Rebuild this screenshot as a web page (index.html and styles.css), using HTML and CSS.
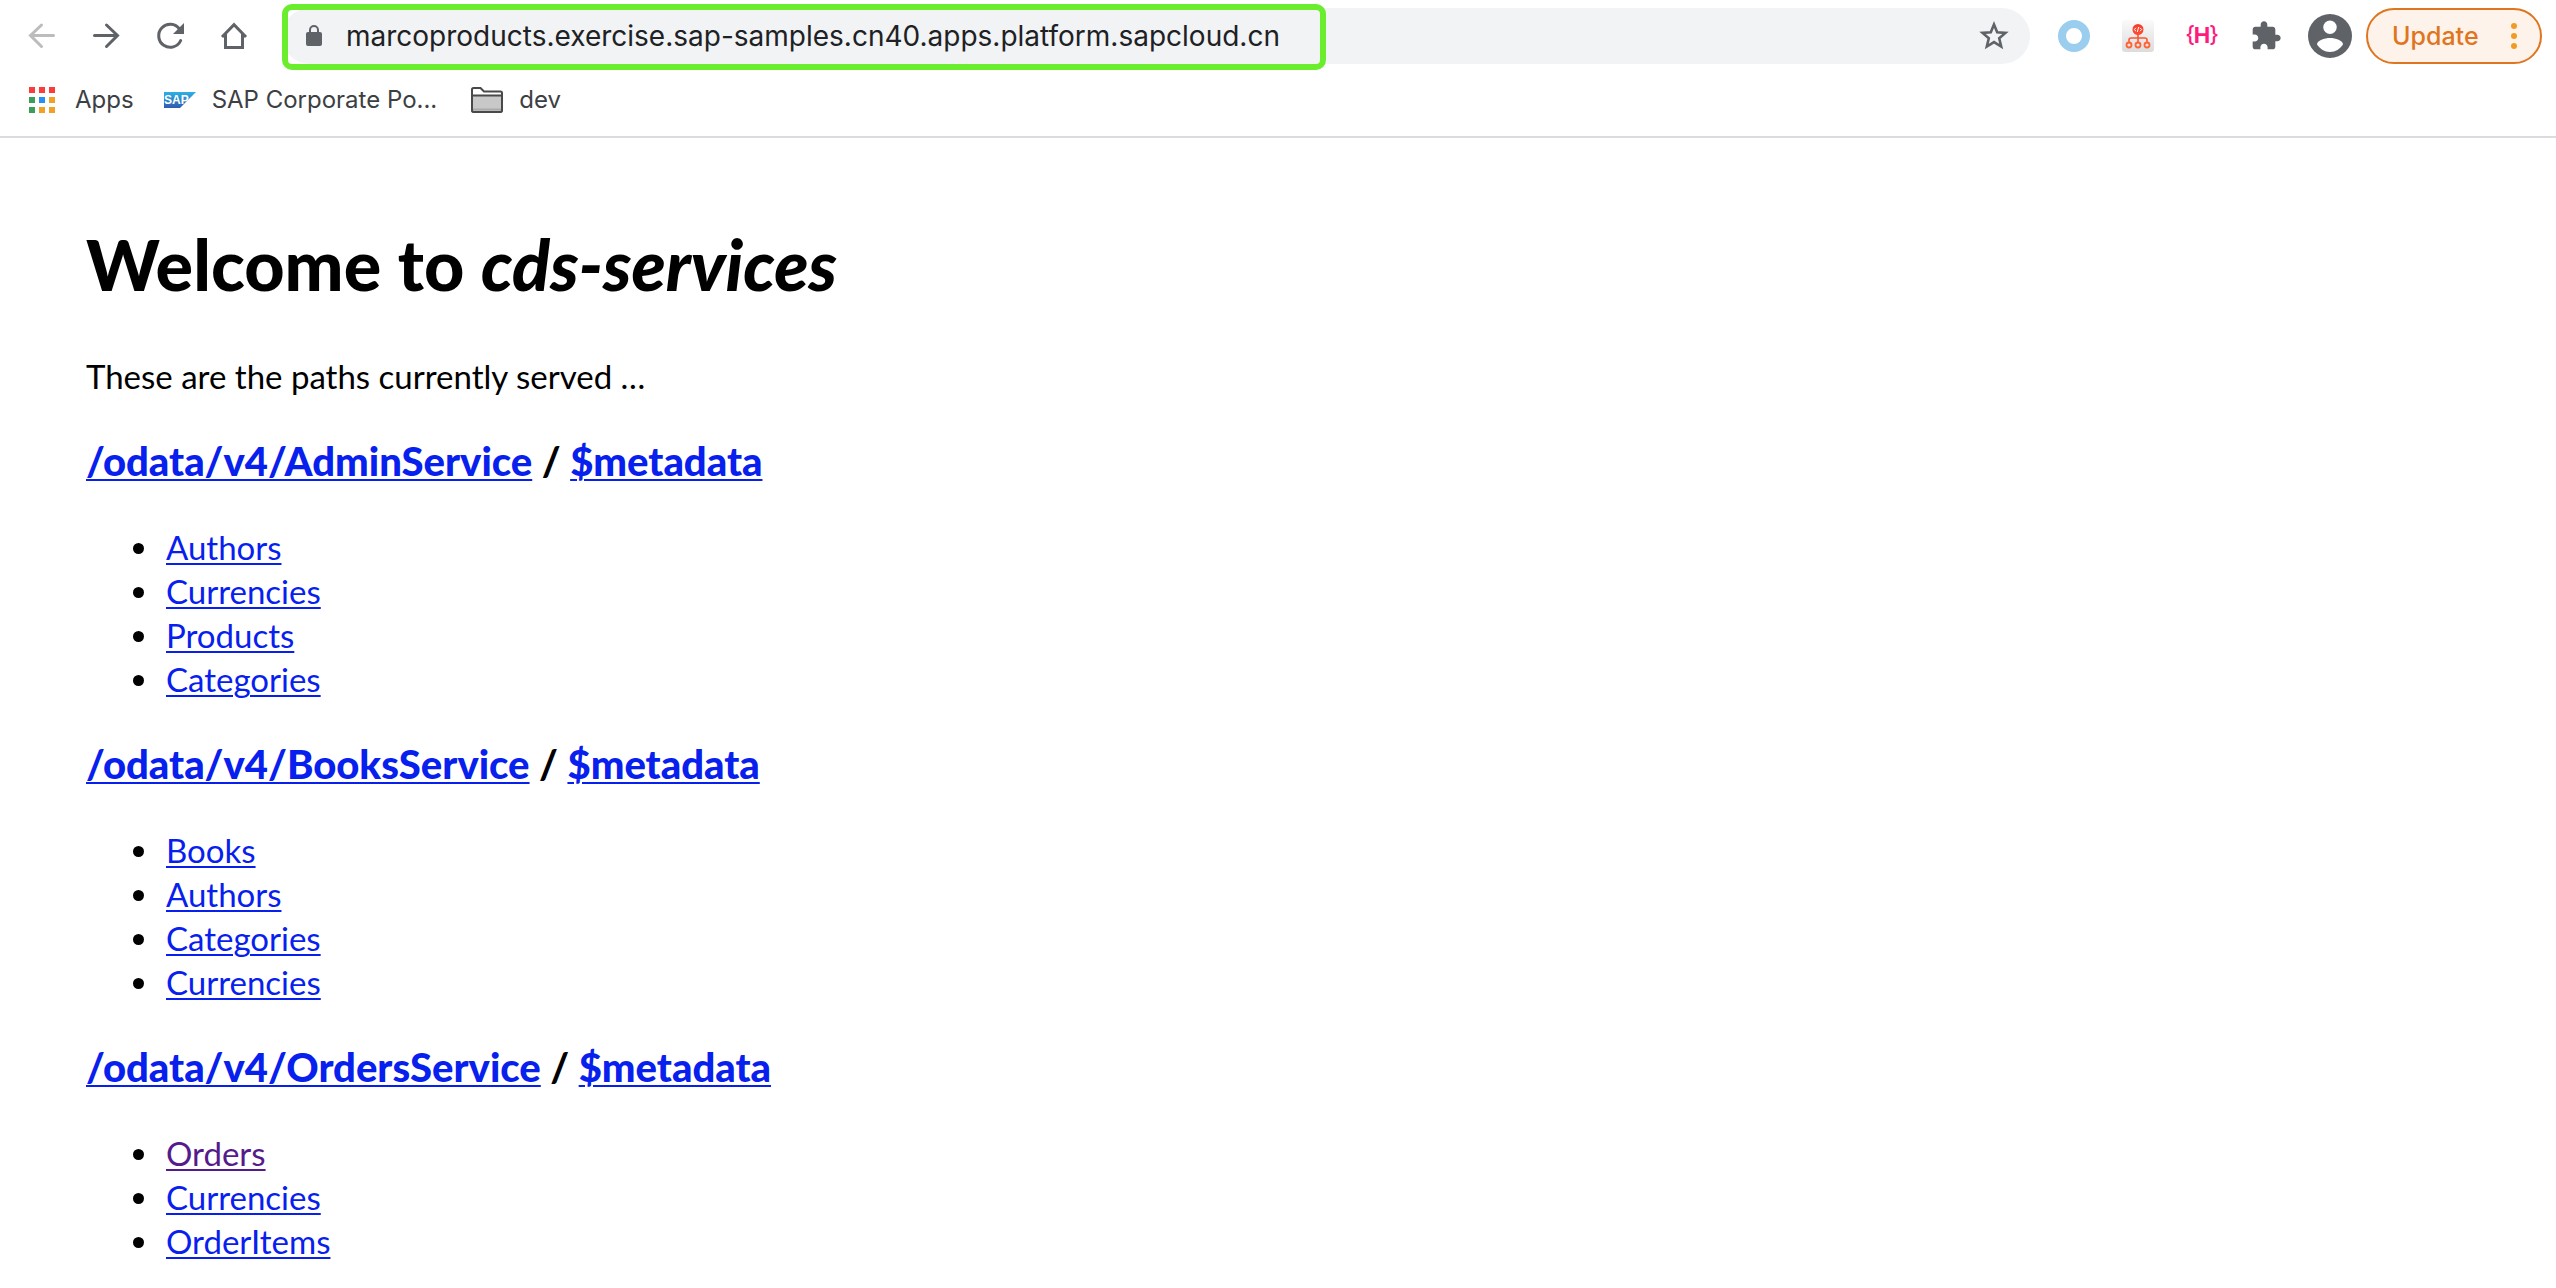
FILE: index.html
```html
<!DOCTYPE html>
<html lang="en">
<head>
<meta charset="utf-8">
<title>cds-services</title>
<link rel="stylesheet" href="styles.css">
</head>
<body>
<header class="browser">
  <div class="toolbar">
    <nav class="button-row" aria-label="Navigation">
      <button class="icon-button" aria-label="Back" disabled>
        <svg viewBox="0 0 32 32" width="32" height="32" fill="none" stroke="#babcbe" stroke-width="3" stroke-linecap="round"><path d="M27.500 15.500H5M15.500 5L4.500 15.500L15.500 26.500"/></svg>
      </button>
      <button class="icon-button" aria-label="Forward">
        <svg viewBox="0 0 32 32" width="32" height="32" fill="none" stroke="#5f6368" stroke-width="3" stroke-linecap="round"><path d="M4.500 15.500H27M16.500 5L27.500 15.500L16.500 26.500"/></svg>
      </button>
      <button class="icon-button" aria-label="Reload">
        <svg viewBox="0 0 32 32" width="32" height="32"><path d="M26.700 20.500A11.500 11.500 0 1 1 25.500 9" fill="none" stroke="#5f6368" stroke-width="3" stroke-linecap="round"/><path d="M30 3V14H19Z" fill="#5f6368"/></svg>
      </button>
      <button class="icon-button" aria-label="Home">
        <svg viewBox="0 0 32 32" width="32" height="32" fill="none" stroke="#5f6368" stroke-width="3"><path d="M4 17L16 4.700L28 17M7.500 14V27.500H24.500V14"/></svg>
      </button>
    </nav>
    <div class="omnibox">
      <label class="address">
        <svg viewBox="0 0 16 22" width="16" height="22"><rect y="7" width="16" height="14" rx="2" fill="#5f6368"/><path d="M4 8V5a4 4 0 0 1 8 0V8" fill="none" stroke="#5f6368" stroke-width="2"/></svg>
        <input class="url" type="text" aria-label="Address" value="marcoproducts.exercise.sap-samples.cn40.apps.platform.sapcloud.cn">
      </label>
      <button class="icon-button" aria-label="Bookmark this page">
        <svg viewBox="0 0 32 32" width="32" height="32"><path d="M16 4.500L19.200 12.200L27.500 12.900L21.200 18.300L23.200 26.500L16 22.100L8.800 26.500L10.800 18.300L4.500 12.900L12.800 12.200Z" fill="none" stroke="#5f6368" stroke-width="2.600"/></svg>
      </button>
    </div>
    <div class="button-row">
      <button class="icon-button" aria-label="Circle extension">
        <svg viewBox="0 0 32 32" width="32" height="32"><circle cx="16" cy="16" r="12" fill="#fff" stroke="#9bcdee" stroke-width="8"/></svg>
      </button>
      <button class="icon-button" aria-label="Code tree extension">
        <svg viewBox="0 0 32 32" width="32" height="32">
          <defs>
            <linearGradient id="tile" x1="0" y1="0" x2="0" y2="1"><stop offset="0" stop-color="#fafafa"/><stop offset="1" stop-color="#dcdcdc"/></linearGradient>
            <linearGradient id="tree" gradientUnits="userSpaceOnUse" x1="0" y1="4" x2="0" y2="28"><stop offset="0" stop-color="#f9382f"/><stop offset="1" stop-color="#ff6a35"/></linearGradient>
          </defs>
          <rect width="32" height="32" rx="3" fill="url(#tile)"/>
          <circle cx="16" cy="9.500" r="5.500" fill="url(#tree)"/>
          <path d="M14 7.800L12.300 9.500L14 11.200M18 7.800L19.700 9.500L18 11.200M16.700 7L15.300 12" fill="none" stroke="#fff" stroke-width="1"/>
          <path d="M16 14V22M7 22V20Q7 18 9 18H23Q25 18 25 20V22" fill="none" stroke="url(#tree)" stroke-width="1.600"/>
          <g fill="none" stroke="#ff6233" stroke-width="1.800"><circle cx="7" cy="25" r="2.500"/><circle cx="16" cy="25" r="2.500"/><circle cx="25" cy="25" r="2.500"/></g>
        </svg>
      </button>
      <button class="icon-button" aria-label="H extension">
        <svg class="h-mark" viewBox="0 0 32 32" width="32" height="32"><text class="h-brace" x="4" y="22">{</text><text class="h-letter" x="16" y="23">H</text><text class="h-brace" x="28" y="22">}</text></svg>
      </button>
      <button class="icon-button" aria-label="Extensions">
        <svg viewBox="0 0 24 24" width="32" height="32"><path d="M20.500 11H19V7c0-1.100-.9-2-2-2h-4V3.500C13 2.120 11.880 1 10.500 1S8 2.120 8 3.500V5H4c-1.100 0-1.990.9-1.990 2v3.800H3.500c1.490 0 2.700 1.210 2.700 2.700s-1.210 2.700-2.700 2.700H2V20c0 1.100.9 2 2 2h3.800v-1.500c0-1.490 1.210-2.700 2.700-2.700 1.490 0 2.700 1.210 2.700 2.700V22H17c1.100 0 2-.9 2-2v-4h1.500c1.380 0 2.500-1.120 2.500-2.500S21.880 11 20.500 11z" fill="#5f6368"/></svg>
      </button>
      <button class="icon-button" aria-label="Profile">
        <svg viewBox="0 0 44 44" width="44" height="44"><circle cx="22" cy="22" r="22" fill="#5f6368"/><circle cx="22" cy="13.300" r="6.700" fill="#fff"/><path d="M9 30.500C9 26.500 16.500 24 22 24S35 26.500 35 30.500C32 35 27.500 38 22 38S12 35 9 30.500Z" fill="#fff"/></svg>
      </button>
      <button class="update">Update
        <svg viewBox="0 0 8 28" width="8" height="28" fill="#f29a26"><circle cx="4" cy="4" r="3"/><circle cx="4" cy="14" r="3"/><circle cx="4" cy="24" r="3"/></svg>
      </button>
    </div>
  </div>
  <nav class="bookmarks" aria-label="Bookmarks">
    <a class="bookmark apps" href="#">
      <svg viewBox="0 0 26 26" width="26" height="26"><path d="M0 0h6v6H0zM10 0h6v6h-6zM20 0h6v6h-6z" fill="#fa3c3a"/><path d="M0 10h6v6H0zM0 20h6v6H0z" fill="#399e5a"/><path d="M10 10h6v6h-6z" fill="#2490f5"/><path d="M20 10h6v6h-6zM10 20h6v6h-6zM20 20h6v6h-6z" fill="#f2a126"/></svg>
      Apps
    </a>
    <a class="bookmark" href="#">
      <svg viewBox="0 0 32 16" width="32" height="16"><defs><linearGradient id="sap" x1="0" y1="0" x2="0" y2="1"><stop offset="0" stop-color="#2cb1e6"/><stop offset="1" stop-color="#2f5bae"/></linearGradient></defs><path d="M0 0H32L16 16H0Z" fill="url(#sap)"/><text class="sap-mark" x="0" y="12">SAP</text></svg>
      SAP Corporate Po...
    </a>
    <a class="bookmark" href="#">
      <svg viewBox="0 0 32 26" width="32" height="26" stroke="#48494b" stroke-width="2"><path d="M1 23V2.500Q1 1 2.500 1H9.500L13 4.500H29.500Q31 4.500 31 6V23Q31 25 29 25H3Q1 25 1 23Z" fill="#fff"/><path d="M1 8.500H31V23Q31 25 29 25H3Q1 25 1 23Z" fill="#c8c8c8"/><path d="M2 22.500H30" stroke="#aaa"/></svg>
      dev
    </a>
  </nav>
</header>
<main class="page">
  <h1>Welcome to <em>cds-services</em></h1>
  <p>These are the paths currently served …</p>
  <h3><a href="#">/odata/v4/AdminService</a> / <a href="#">$metadata</a></h3>
  <ul>
    <li><a href="#">Authors</a></li>
    <li><a href="#">Currencies</a></li>
    <li><a href="#">Products</a></li>
    <li><a href="#">Categories</a></li>
  </ul>
  <h3><a href="#">/odata/v4/BooksService</a> / <a href="#">$metadata</a></h3>
  <ul>
    <li><a href="#">Books</a></li>
    <li><a href="#">Authors</a></li>
    <li><a href="#">Categories</a></li>
    <li><a href="#">Currencies</a></li>
  </ul>
  <h3><a href="#">/odata/v4/OrdersService</a> / <a href="#">$metadata</a></h3>
  <ul>
    <li><a class="visited" href="#">Orders</a></li>
    <li><a href="#">Currencies</a></li>
    <li><a href="#">OrderItems</a></li>
  </ul>
</main>
</body>
</html>
```
FILE: styles.css
```css
* {
  box-sizing: border-box;
}

body {
  margin: 0;
  background: #fff;
  color: #000;
  font-family: "Avenir Next", Lato, sans-serif;
  font-size: 33px;
  line-height: 44px;
}

/* Browser chrome */
.browser {
  border-bottom: 2px solid #dadce0;
  font-family: Inter, sans-serif;
}

.toolbar {
  display: flex;
  align-items: center;
  gap: 12px;
  padding: 8px 14px 0 10px;
}

.button-row {
  display: flex;
  align-items: center;
}

.icon-button {
  display: flex;
  align-items: center;
  justify-content: center;
  width: 64px;
  height: 56px;
  padding: 0;
  border: 0;
  background: none;
}

.omnibox {
  display: flex;
  flex: 1;
  align-items: center;
  justify-content: space-between;
  min-width: 0;
  height: 56px;
  margin-left: 4px;
  padding-right: 4px;
  border-radius: 28px;
  background: #f1f3f4;
}

.address {
  position: relative;
  display: flex;
  align-items: center;
  gap: 24px;
  height: 56px;
  padding-left: 24px;
}

/* Green frame drawn over the address */
.address::after {
  content: "";
  position: absolute;
  inset: -4px 0 -6px 0;
  border: 6px solid #69ed2d;
  border-radius: 10px;
  pointer-events: none;
}

.url {
  width: 980px;
  padding: 0;
  border: 0;
  background: none;
  color: #202124;
  font: 28px/40px Inter, sans-serif;
}

.update {
  display: flex;
  align-items: center;
  justify-content: space-between;
  width: 176px;
  height: 56px;
  margin-left: 4px;
  padding: 0 22px 0 24px;
  border: 2px solid #e0751f;
  border-radius: 28px;
  background: #fdf3ea;
  color: #e0751f;
  font: 500 25px/32px Inter, sans-serif;
}

.h-mark {
  fill: #ff1a7d;
  font-family: Inter, sans-serif;
  text-anchor: middle;
}

.h-letter {
  font-size: 22px;
  font-weight: 700;
}

.h-brace {
  font-size: 22px;
  font-weight: 500;
}

.sap-mark {
  fill: #fff;
  font: 700 12px "Liberation Sans", sans-serif;
}

.bookmarks {
  display: flex;
  align-items: center;
  gap: 34px;
  height: 72px;
  padding: 0 29px;
}

.bookmark {
  display: flex;
  align-items: center;
  gap: 16px;
  color: #3c4043;
  font-size: 24px;
  line-height: 32px;
  text-decoration: none;
}

.apps {
  gap: 20px;
  margin-right: -4px;
}

/* Service index */
.page {
  padding: 82px 86px 0;
}

.page h1 {
  margin: 0;
  font-family: "Avenir Next", "Lato Black", Lato, sans-serif;
  font-size: 70px;
  font-weight: 900;
  line-height: 88px;
}

.page p {
  margin: 46px 0 0;
}

.page h3 {
  margin: 37px 0 0;
  font-family: "Avenir Next", "Lato Black", Lato, sans-serif;
  font-size: 40px;
  font-weight: 900;
  line-height: 52px;
}

.page ul {
  margin: 38px 0 0;
  padding-left: 76px;
}

.page li {
  padding-left: 4px;
}

.page a {
  color: #0820ee;
  text-decoration-thickness: 2px;
  text-underline-offset: 3px;
}

.page .visited {
  color: #551a8b;
}
```
